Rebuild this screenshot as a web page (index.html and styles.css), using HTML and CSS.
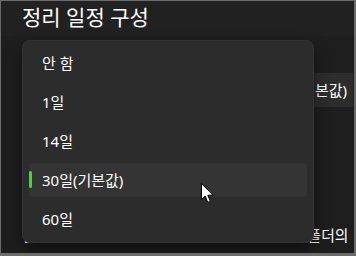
FILE: index.html
```html
<!DOCTYPE html>
<html lang="ko">
<head>
    <meta charset="UTF-8">
    <meta name="viewport" content="width=device-width, initial-scale=1.0">
    <title>정리 일정 구성</title>
    <link rel="stylesheet" href="styles.css">
</head>
<body>
    <div class="window">
        <div class="header">
            <h1>정리 일정 구성</h1>
        </div>

        <div class="content">
            <div class="setting-row">
                <span class="setting-label"></span>
                <div class="combo">30일(기본값)</div>
            </div>
            <p class="desc">임시 파일이 이 기간보다 오래된 경우 다운로드 폴더의</p>
        </div>

        <!-- dropdown popup over the page -->
        <ul class="popup">
            <li class="option">안 함</li>
            <li class="option">1일</li>
            <li class="option">14일</li>
            <li class="option selected">30일(기본값)</li>
            <li class="option">60일</li>
        </ul>

        <svg class="cursor" width="14" height="21" viewBox="0 0 14 21">
            <path d="M0.5 0.5 L0.5 16.5 L4.2 13 L6.8 19.4 L9.4 18.3 L6.8 12.2 L12 12.2 Z" fill="#fff" stroke="#000" stroke-width="1"/>
        </svg>
    </div>
</body>
</html>
```

FILE: styles.css
```css
* {
    margin: 0;
    padding: 0;
    box-sizing: border-box;
}

body {
    background-color: #6b6b6b;
    font-family: "Noto Sans", "Noto Sans CJK KR", sans-serif;
    color: #fff;
}

.window {
    position: relative;
    width: 353px;
    height: 252px;
    margin: 1px 2px 3px 1px;
    background-color: #1e1e1e;
    overflow: hidden;
}

.header {
    height: 35px;
    padding-left: 21px;
    background-color: #212121;
}

.header h1 {
    font-size: 21px;
    font-weight: 400;
    line-height: 32px;
}

.content {
    margin-right: 1px;
    padding-left: 21px;
    overflow: hidden;
}

.setting-row {
    display: flex;
    align-items: center;
    height: 34px;
    margin-top: 37px;
}

.setting-label {
    flex: 1;
}

.combo {
    height: 34px;
    padding: 0 6px 0 12px;
    background-color: #2d2d2d;
    border-radius: 4px 0 0 4px;
    font-size: 15px;
    line-height: 34px;
    white-space: nowrap;
}

.desc {
    margin-top: 118px;
    font-size: 14.8px;
    line-height: 20px;
    white-space: nowrap;
}

.popup {
    position: absolute;
    left: 21px;
    top: 39px;
    width: 292px;
    height: 203px;
    padding: 5px 6px 7px;
    list-style: none;
    background-color: #2c2c2c;
    border: 1px solid #333;
    border-radius: 8px;
    box-shadow: 0 8px 16px rgba(0, 0, 0, 0.45);
}

.option {
    position: relative;
    height: 34px;
    margin-bottom: 5px;
    padding-left: 13px;
    border-radius: 4px;
    font-size: 15px;
    line-height: 34px;
}

.option:last-child {
    margin-bottom: 0;
}

.option.selected {
    background-color: #343434;
}

.option.selected::before {
    content: "";
    position: absolute;
    left: 0;
    top: 8px;
    width: 3px;
    height: 17px;
    border-radius: 2px;
    background-color: #5cc653;
}

.cursor {
    position: absolute;
    left: 200px;
    top: 182px;
}
```
